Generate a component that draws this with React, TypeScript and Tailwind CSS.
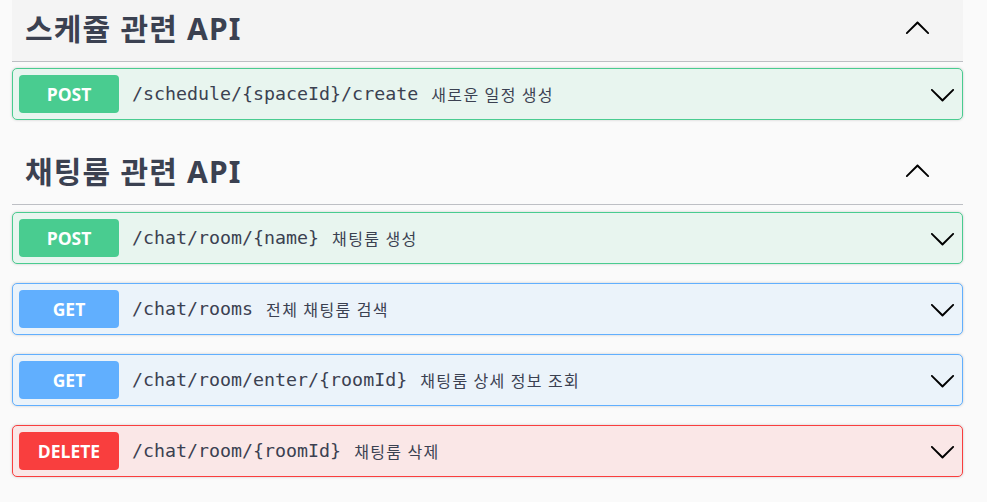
import React from "react";

type Method = "POST" | "GET" | "DELETE";

interface Operation {
  method: Method;
  path: string;
  summary: string;
}

interface TagSection {
  name: string;
  operations: Operation[];
  hovered?: boolean;
}

const SECTIONS: TagSection[] = [
  {
    name: "스케쥴 관련 API",
    hovered: true,
    operations: [{ method: "POST", path: "/schedule/{spaceId}/create", summary: "새로운 일정 생성" }],
  },
  {
    name: "채팅룸 관련 API",
    operations: [
      { method: "POST", path: "/chat/room/{name}", summary: "채팅룸 생성" },
      { method: "GET", path: "/chat/rooms", summary: "전체 채팅룸 검색" },
      { method: "GET", path: "/chat/room/enter/{roomId}", summary: "채팅룸 상세 정보 조회" },
      { method: "DELETE", path: "/chat/room/{roomId}", summary: "채팅룸 삭제" },
    ],
  },
];

const METHOD_STYLES: Record<Method, { block: string; badge: string }> = {
  POST: { block: "border-[#49cc90] bg-[#e8f5ef]", badge: "bg-[#49cc90]" },
  GET: { block: "border-[#61affe] bg-[#ebf3fa]", badge: "bg-[#61affe]" },
  DELETE: { block: "border-[#f93e3e] bg-[#fae7e7]", badge: "bg-[#f93e3e]" },
};

function Arrow({ up = false }: { up?: boolean }) {
  return (
    <svg
      className={up ? "h-[27px] w-[27px] rotate-180" : "h-[27px] w-[27px]"}
      viewBox="0 0 20 20"
      aria-hidden="true"
    >
      <path
        fill="#000"
        d="M17.418 6.109c.272-.268.709-.268.979 0s.271.701 0 .969l-7.908 7.83c-.27.268-.707.268-.979 0l-7.908-7.83c-.27-.268-.27-.701 0-.969.271-.268.709-.268.979 0L10 13.25l7.418-7.141z"
      />
    </svg>
  );
}

function OperationRow({ op }: { op: Operation }) {
  const style = METHOD_STYLES[op.method];
  return (
    <div
      className={`mb-[19px] flex h-[52px] items-center rounded-[5px] border px-[6px] shadow-[0_0_3px_rgba(0,0,0,0.19)] ${style.block}`}
    >
      <span
        className={`flex h-[38px] w-[100px] shrink-0 items-center justify-center rounded-[4px] text-[17.5px] font-bold text-white [font-family:'Open_Sans',sans-serif] ${style.badge}`}
      >
        {op.method}
      </span>
      <span className="ml-[13px] text-[18.3px] text-[#3b4151] [font-family:'DejaVu_Sans_Mono',monospace]">
        {op.path}
      </span>
      <span className="ml-[13px] flex-1 text-[16px] tracking-[1.4px] text-[#3b4151] [font-family:'Noto_Sans_CJK_KR',sans-serif]">
        {op.summary}
      </span>
      <span className="flex items-center">
        <Arrow />
      </span>
    </div>
  );
}

function Section({ section, first }: { section: TagSection; first: boolean }) {
  return (
    <section className={first ? "-mt-[4px]" : ""}>
      <div
        className={`flex h-[66px] items-center border-b border-[#bdbfc4] pl-[13px] pr-[32px] ${
          first ? "mb-[6px]" : "mb-[7px]"
        } ${section.hovered ? "bg-[#f4f4f4]" : ""}`}
      >
        <h3 className="flex-1 text-[30px] font-bold tracking-[1.2px] text-[#3b4151] [font-family:'Noto_Sans','Noto_Sans_CJK_KR',sans-serif]">
          {section.name}
        </h3>
        <Arrow up />
      </div>
      {section.operations.map((op) => (
        <OperationRow key={op.method + op.path} op={op} />
      ))}
    </section>
  );
}

export default function App() {
  return (
    <div className="h-[502px] w-[987px] overflow-hidden bg-[#fafafa]">
      <div className="ml-[12px] w-[951px]">
        {SECTIONS.map((section, i) => (
          <Section key={section.name} section={section} first={i === 0} />
        ))}
      </div>
    </div>
  );
}
